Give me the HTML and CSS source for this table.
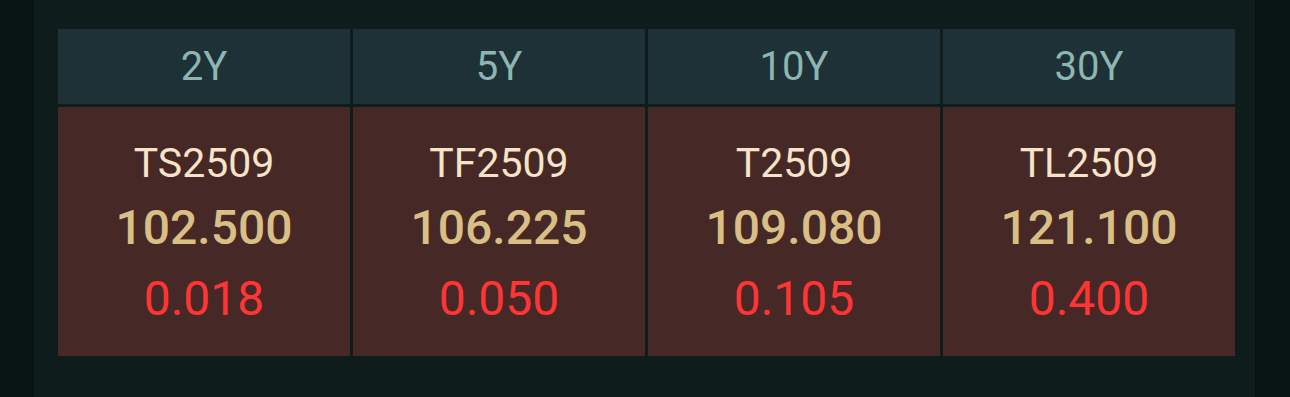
FILE: index.html
```html
<!DOCTYPE html>
<html>
<head>
<meta charset="utf-8">
<link rel="stylesheet" href="styles.css">
</head>
<body>
<div class="panel">
  <div class="grid">
    <div class="head">2Y</div>
    <div class="head">5Y</div>
    <div class="head">10Y</div>
    <div class="head">30Y</div>
    <div class="cell"><div class="name">TS2509</div><div class="price">102.500</div><div class="chg">0.018</div></div>
    <div class="cell"><div class="name">TF2509</div><div class="price">106.225</div><div class="chg">0.050</div></div>
    <div class="cell"><div class="name">T2509</div><div class="price">109.080</div><div class="chg">0.105</div></div>
    <div class="cell"><div class="name">TL2509</div><div class="price">121.100</div><div class="chg">0.400</div></div>
  </div>
</div>
</body>
</html>
```
FILE: styles.css
```css
html, body {
  margin: 0;
  padding: 0;
  background: #081414;
  font-family: Roboto, "Liberation Sans", sans-serif;
}
.panel {
  margin-left: 34px;
  width: 1221px;
  height: 397px;
  box-sizing: border-box;
  padding: 29px 20px 0 24px;
  background: #0e1c1c;
}
.grid {
  display: grid;
  grid-template-columns: repeat(4, 292px);
  grid-template-rows: 75px 249px;
  column-gap: 3px;
  row-gap: 3px;
}
.head {
  background: #1e3136;
  color: #8db6b2;
  font-size: 40px;
  line-height: 75px;
  text-align: center;
}
.cell {
  background: #462926;
  display: flex;
  flex-direction: column;
  align-items: center;
  padding-top: 31px;
  box-sizing: border-box;
}
.name {
  color: #f6e3c8;
  font-size: 41px;
  line-height: 50px;
}
.price {
  color: #d9bf85;
  font-size: 48px;
  font-weight: 500;
  line-height: 60px;
  margin-top: 10px;
}
.chg {
  color: #ff3535;
  font-size: 48px;
  line-height: 60px;
  margin-top: 11px;
}
```
